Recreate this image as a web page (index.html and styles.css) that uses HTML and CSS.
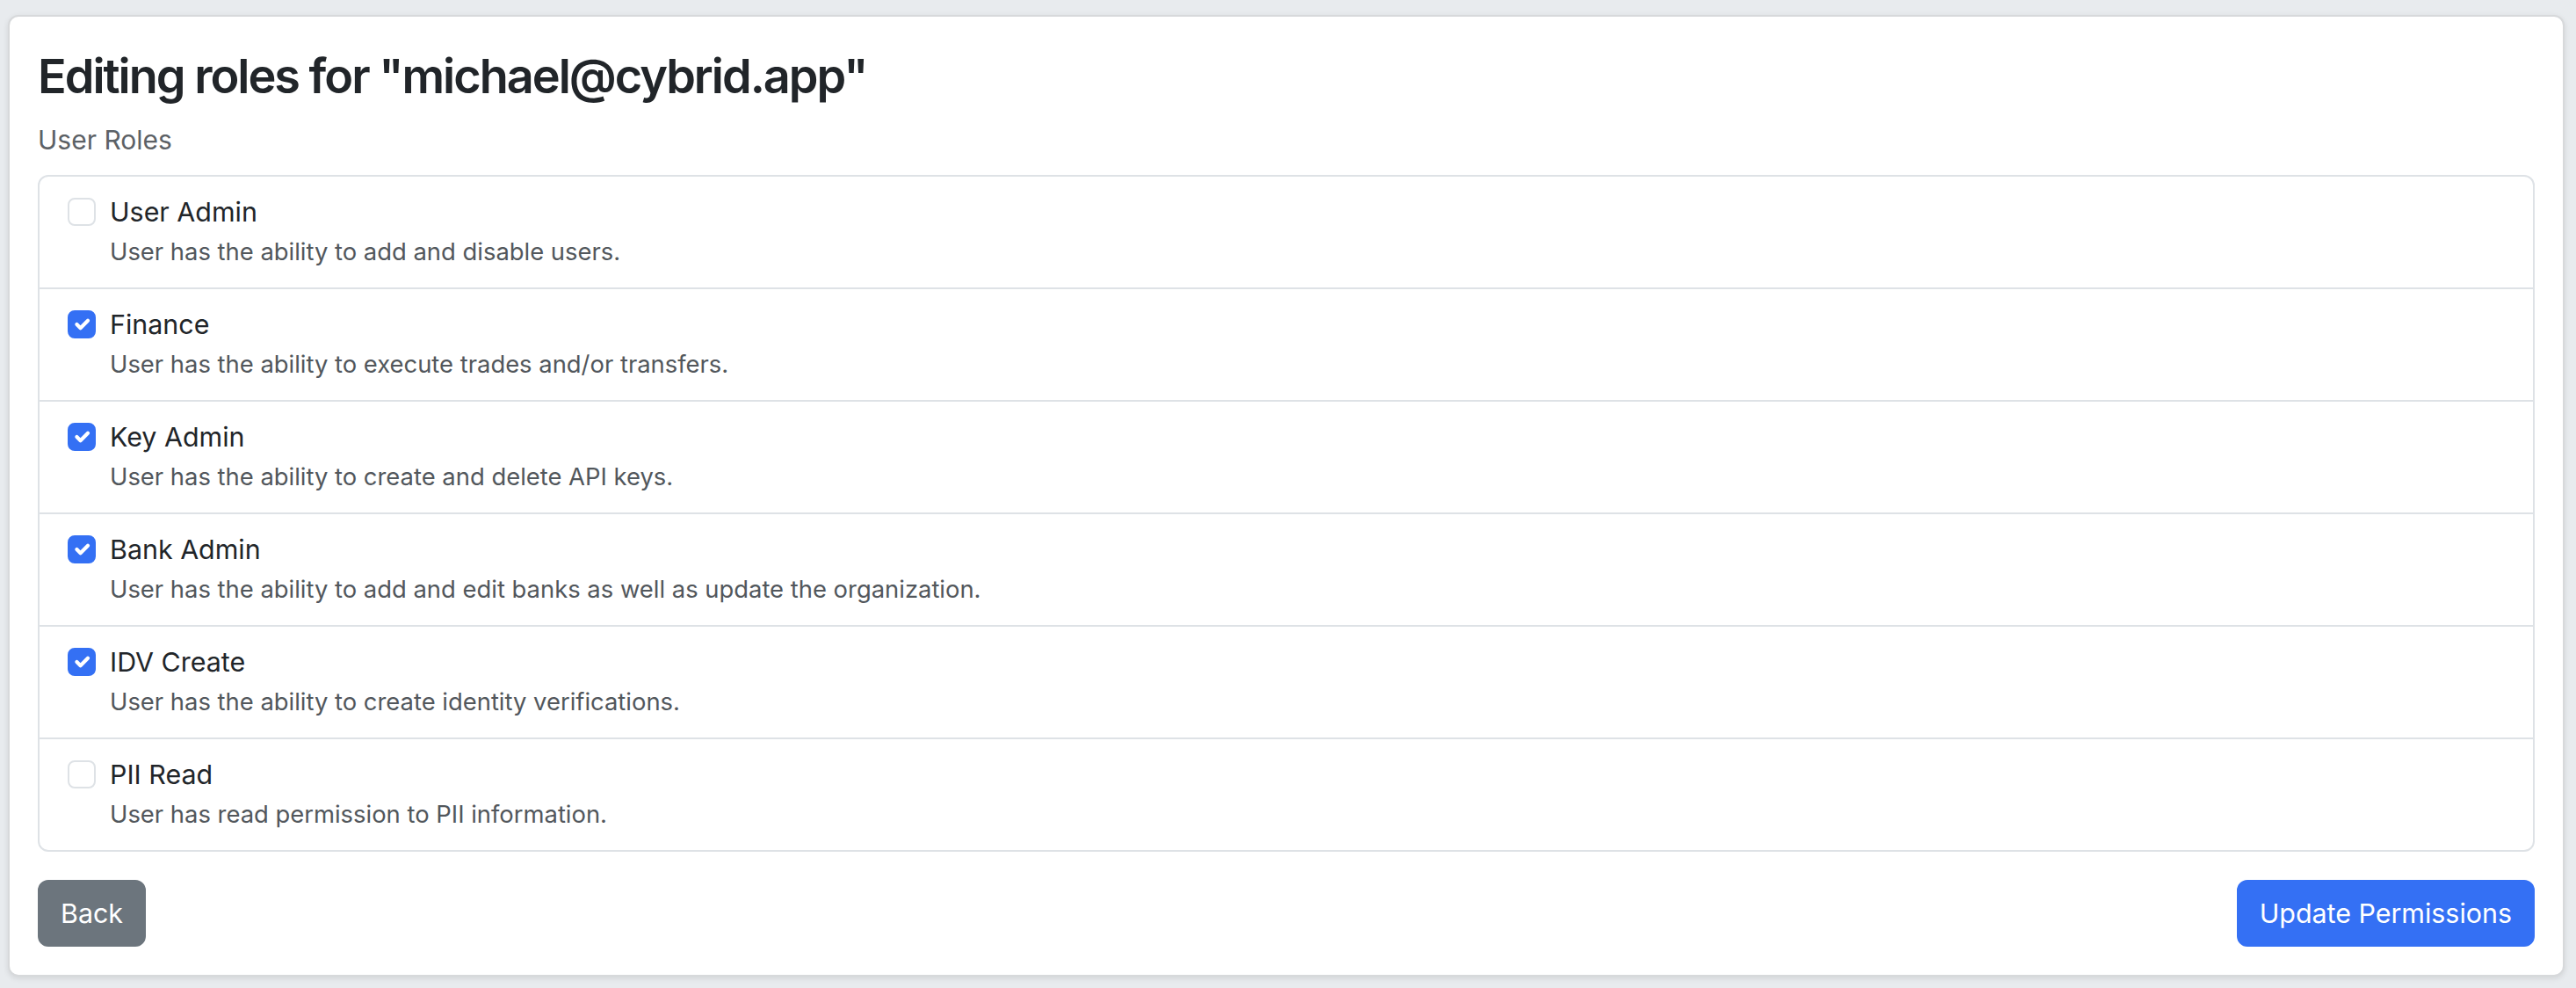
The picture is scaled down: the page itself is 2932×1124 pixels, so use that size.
FILE: index.html
```html
<!DOCTYPE html>
<html lang="en">
<head>
<meta charset="utf-8">
<title>Editing roles</title>
<link rel="stylesheet" href="styles.css">
</head>
<body>
<main class="card">
  <h1 class="title">Editing roles for "michael@cybrid.app"</h1>
  <div class="section-label">User Roles</div>
  <ul class="list">
    <li class="item">
      <span class="box"></span>
      <div class="text">
        <div class="name">User Admin</div>
        <div class="desc">User has the ability to add and disable users.</div>
      </div>
    </li>
    <li class="item">
      <span class="box checked"><svg viewBox="0 0 20 20"><path d="M6 10l3 3l6-6"/></svg></span>
      <div class="text">
        <div class="name">Finance</div>
        <div class="desc">User has the ability to execute trades and/or transfers.</div>
      </div>
    </li>
    <li class="item">
      <span class="box checked"><svg viewBox="0 0 20 20"><path d="M6 10l3 3l6-6"/></svg></span>
      <div class="text">
        <div class="name">Key Admin</div>
        <div class="desc">User has the ability to create and delete API keys.</div>
      </div>
    </li>
    <li class="item">
      <span class="box checked"><svg viewBox="0 0 20 20"><path d="M6 10l3 3l6-6"/></svg></span>
      <div class="text">
        <div class="name">Bank Admin</div>
        <div class="desc">User has the ability to add and edit banks as well as update the organization.</div>
      </div>
    </li>
    <li class="item">
      <span class="box checked"><svg viewBox="0 0 20 20"><path d="M6 10l3 3l6-6"/></svg></span>
      <div class="text">
        <div class="name">IDV Create</div>
        <div class="desc">User has the ability to create identity verifications.</div>
      </div>
    </li>
    <li class="item">
      <span class="box"></span>
      <div class="text">
        <div class="name">PII Read</div>
        <div class="desc">User has read permission to PII information.</div>
      </div>
    </li>
  </ul>
  <div class="actions">
    <button class="btn btn-secondary">Back</button>
    <button class="btn btn-primary">Update Permissions</button>
  </div>
</main>
</body>
</html>
```
FILE: styles.css
```css
html, body {
  margin: 0;
  padding: 0;
}
body {
  background: #e8ebee;
  padding: 17px 13px 17px 9px;
  font-family: Inter, "Liberation Sans", sans-serif;
  color: #212529;
}
.card {
  display: block;
  background: #fff;
  border: 2px solid #d7d9db;
  border-radius: 12px;
  padding: 32px;
  box-shadow: 0 2px 6px rgba(0, 0, 0, 0.10);
}
.title {
  font-size: 54px;
  line-height: 72px;
  font-weight: 600;
  margin: 0 0 12px;
  letter-spacing: -2px;
  color: #212529;
}
.section-label {
  font-size: 30px;
  line-height: 48px;
  color: #5c6166;
  margin-bottom: 16px;
}
.list {
  list-style: none;
  margin: 0;
  padding: 0;
  border: 2px solid #dee2e6;
  border-radius: 12px;
}
.item {
  display: flex;
  gap: 16px;
  padding: 16px 32px 20px;
  border-bottom: 2px solid #dee2e6;
}
.item:last-child {
  border-bottom: none;
}
.box {
  flex: none;
  width: 28px;
  height: 28px;
  margin-top: 8px;
  border: 2px solid #dee2e6;
  border-radius: 8px;
  background: #fff;
}
.box svg {
  display: block;
  width: 100%;
  height: 100%;
}
.box path {
  fill: none;
  stroke: #fff;
  stroke-width: 3;
  stroke-linecap: round;
  stroke-linejoin: round;
}
.box.checked {
  background: #3470f4;
  border-color: #3470f4;
}
.name {
  font-size: 30.4px;
  line-height: 48px;
  color: #212529;
}
.desc {
  font-size: 27.4px;
  line-height: 42px;
  color: #52575c;
}
.actions {
  display: flex;
  justify-content: space-between;
  margin-top: 32px;
}
.btn {
  height: 76px;
  padding: 0 24px;
  border: 2px solid transparent;
  border-radius: 12px;
  font-family: Inter, "Liberation Sans", sans-serif;
  font-size: 30.4px;
  color: #fff;
  cursor: pointer;
}
.btn-secondary {
  background: #6c757d;
  border-color: #6c757d;
}
.btn-primary {
  background: #3470f4;
  border-color: #3470f4;
}
```
